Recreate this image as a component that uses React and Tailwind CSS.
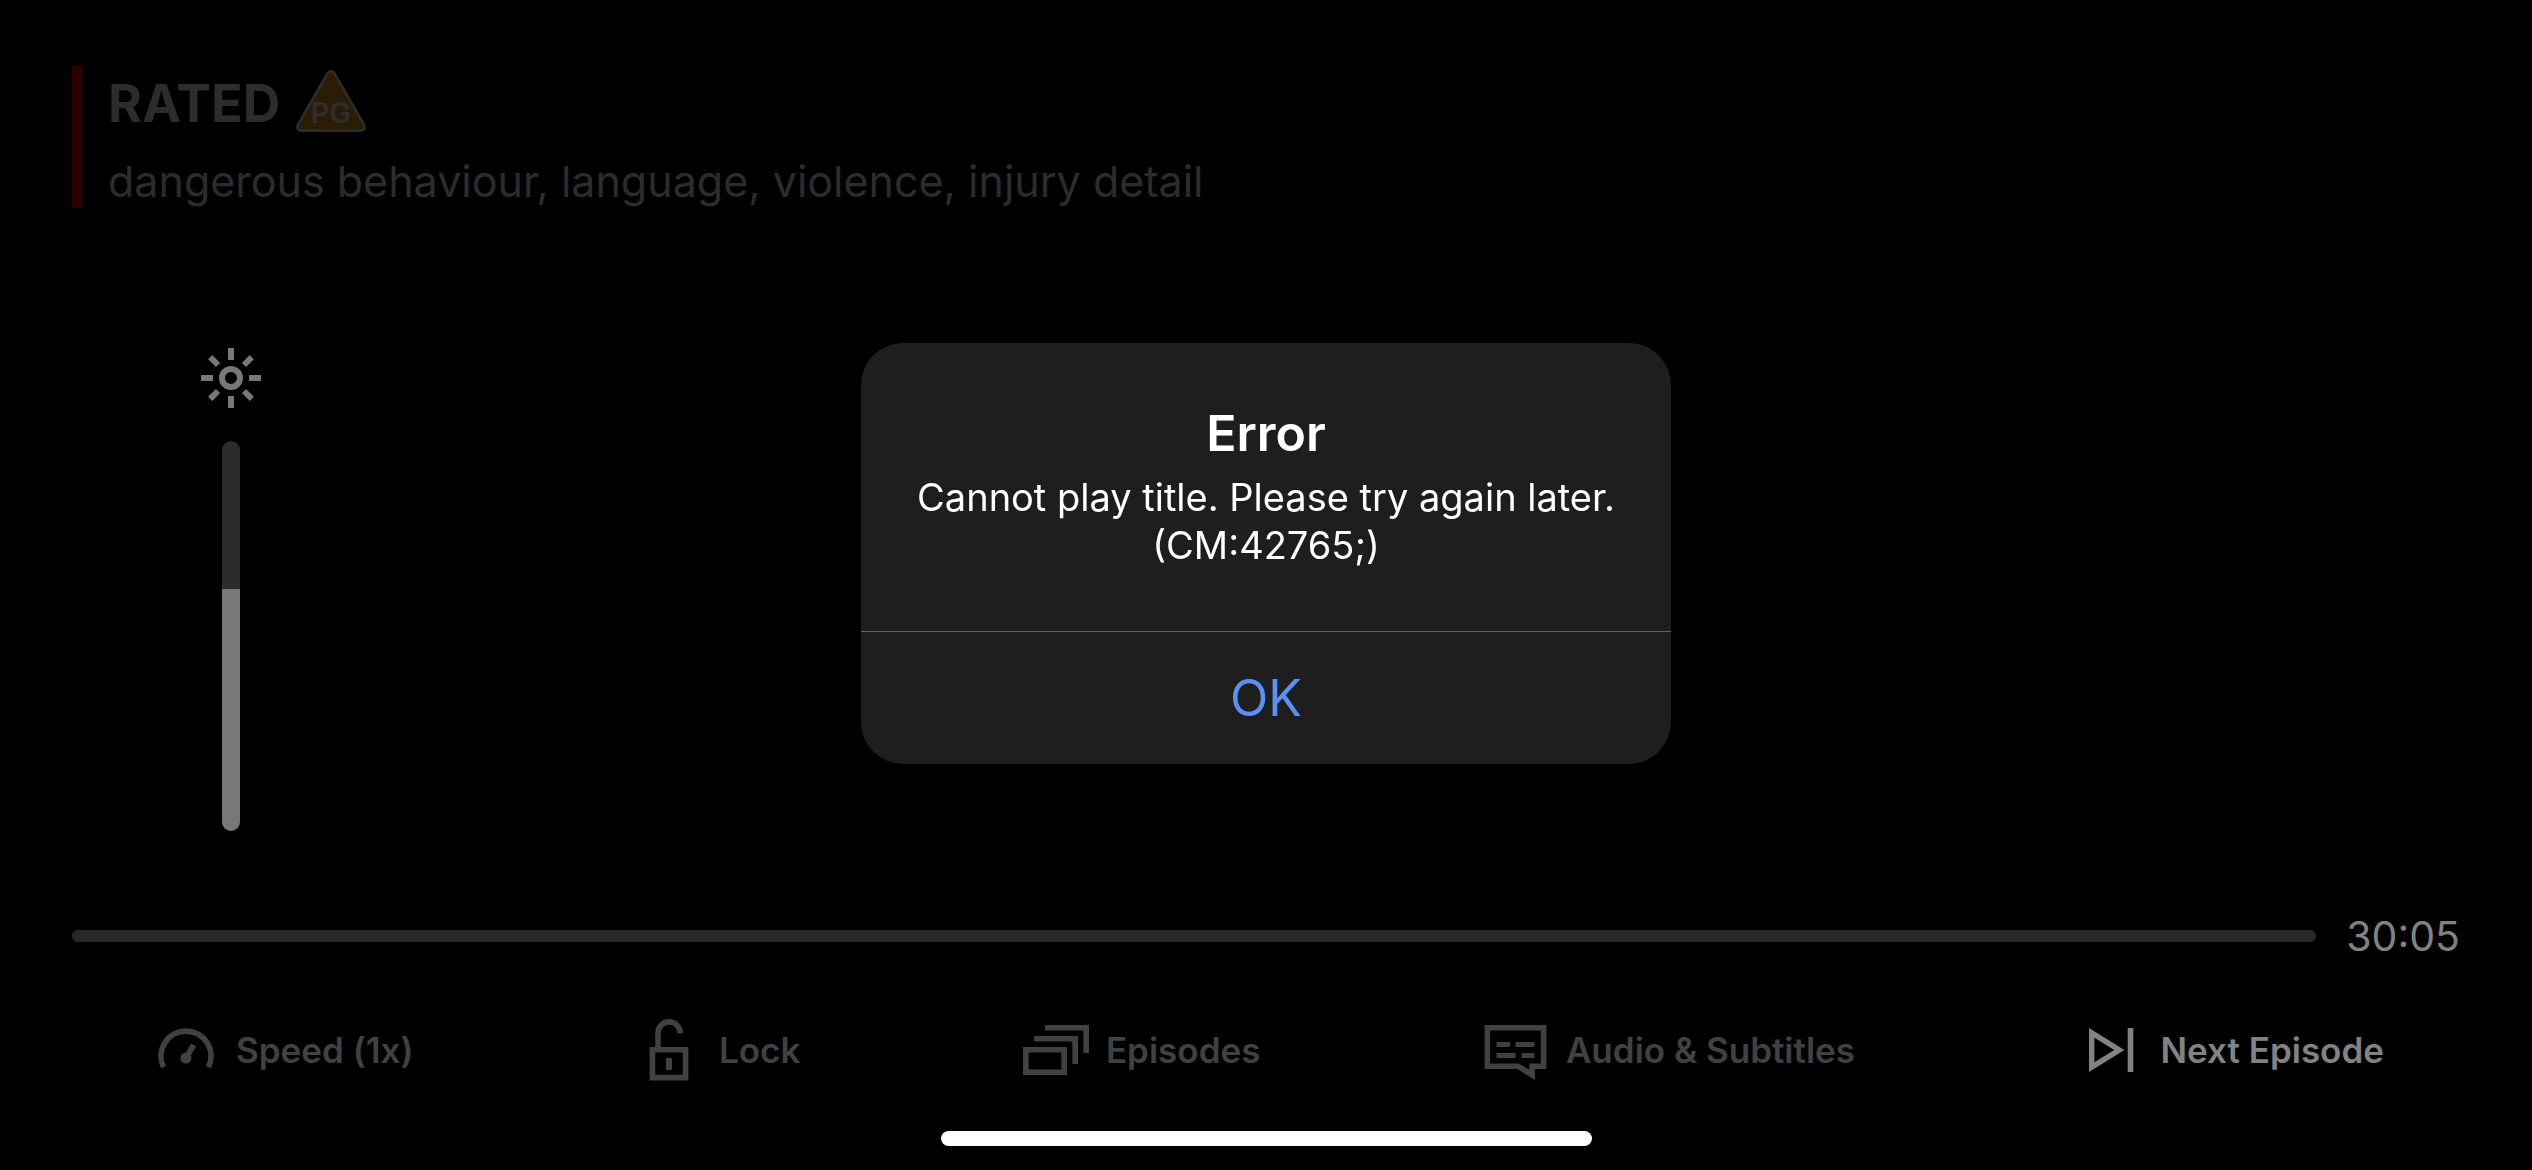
const icons = {
  speed: (
    <>
      <path d="M13.6 53.2A25 25 0 1 1 58.4 53.2" stroke="currentColor" strokeWidth="5.6" />
      <path d="M36 44L43.6 31" stroke="currentColor" strokeWidth="5.6" />
      <circle cx="36" cy="44" r="5.6" fill="currentColor" />
    </>
  ),
  lock: (
    <>
      <path d="M19.4 35.8H52.6V63.6H19.4Z" stroke="currentColor" strokeWidth="5.6" />
      <path d="M25 36V19a11.1 11.1 0 0 1 22.2 0V19.5" stroke="currentColor" strokeWidth="5.6" />
      <path d="M33 44h6v12h-6z" fill="currentColor" />
    </>
  ),
  episodes: (
    <g stroke="currentColor" strokeWidth="5.6">
      <path d="M5.8 35.8H44.2V58.2H5.8Z" />
      <path d="M14 24.8H55.2V50" />
      <path d="M25 13.8H66.2V39" />
    </g>
  ),
  subtitles: (
    <>
      <path d="M7.4 13.8H63.6V52.2H52.2V61L38 52.2H7.4Z" stroke="currentColor" strokeWidth="5.6" />
      <path d="M16.5 28H30v5H16.5zM35.5 28h19v5h-19zM16.5 39h19v5h-19zM41.5 39h13v5h-13z" fill="currentColor" />
    </>
  ),
  next: (
    <path
      d="M14 14V58L49.5 36ZM19.4 23.8V48.2L39.2 36ZM52.7 14H58.3V58H52.7Z"
      fill="currentColor"
      fillRule="evenodd"
    />
  ),
};

const controls = [
  { icon: "speed", label: "Speed (1x)", tone: "text-[#414141]" },
  { icon: "lock", label: "Lock", tone: "text-[#414141]" },
  { icon: "episodes", label: "Episodes", tone: "text-[#414141]" },
  { icon: "subtitles", label: "Audio & Subtitles", tone: "text-[#414141]" },
  { icon: "next", label: "Next Episode", tone: "text-[#828282]" },
];

function Rating() {
  return (
    <header className="flex text-[#2c2c2c]">
      <div className="w-[9px] bg-[#2e0000]" />
      <div className="ml-[27px]">
        <div className="flex gap-[16px]">
          <h1 className="text-[52px] leading-[76px] font-bold">RATED</h1>
          <svg className="mt-[4px] h-[62px] w-[70px]" viewBox="0 0 70 62" fill="none" role="img" aria-label="PG">
            <path
              d="M31.6 3.2Q35 -1 38.4 3.2L68 54.6Q70 60.5 64.5 60.8H5.5Q0 60.5 2 54.6Z"
              fill="#2a1c05"
              stroke="#2e2e2e"
              strokeWidth="2.4"
            />
            <text x="35" y="53" textAnchor="middle" fontSize="29" fontWeight="600" fill="#2e2e2e" className="font-['Inter',sans-serif]">
              PG
            </text>
          </svg>
        </div>
        <p className="mt-[12px] text-[43px] leading-[54px]">dangerous behaviour, language, violence, injury detail</p>
      </div>
    </header>
  );
}

function Brightness() {
  return (
    <label className="mt-[140px] ml-[129px] flex w-[60px] flex-col items-center gap-[33px] text-[#787878]">
      <svg className="size-[60px]" viewBox="-30 -30 60 60" fill="none" stroke="currentColor" strokeWidth="6" role="img" aria-label="Brightness">
        <circle r="9" />
        <path d="M0 -30V-18M0 18V30M-30 0H-18M18 0H30M-20.8 -20.8L-13 -13M20.8 -20.8L13 -13M-20.8 20.8L-13 13M20.8 20.8L13 13" />
      </svg>
      <input
        type="range"
        min="0"
        max="100"
        defaultValue="62"
        className="h-[390px] w-[18px] appearance-none rounded-full bg-linear-to-t from-[#787878] from-62% to-[#2c2c2c] to-62% [direction:rtl] [writing-mode:vertical-lr] [&::-webkit-slider-thumb]:size-0 [&::-webkit-slider-thumb]:appearance-none"
      />
    </label>
  );
}

function ErrorDialog() {
  return (
    <div className="fixed inset-0 flex items-center justify-center pb-[63px]">
      <div role="alertdialog" aria-labelledby="error-title" aria-describedby="error-text" className="w-[810px] overflow-hidden rounded-[42px] bg-[#1e1e1e] text-center text-white">
        <div className="px-[48px] pt-[60px] pb-[62px]">
          <h2 id="error-title" className="text-[50px] leading-[60px] font-semibold">Error</h2>
          <p id="error-text" className="mt-[10px] text-[38px] leading-[48px]">
            Cannot play title. Please try again later. (CM:42765;)
          </p>
        </div>
        <button type="button" className="block h-[133px] w-full border-t border-[#636363] text-[50px] text-[#5a91f7]">
          OK
        </button>
      </div>
    </div>
  );
}

export default function App() {
  return (
    <main className="flex min-h-screen flex-col bg-black px-[72px] pt-[66px] pb-[24px] font-['Inter',sans-serif]">
      <Rating />
      <Brightness />
      <div className="mt-auto flex items-center gap-[30px]">
        <input
          type="range"
          min="0"
          max="1805"
          defaultValue="0"
          aria-label="Playback position"
          className="h-[12px] min-w-0 flex-1 appearance-none rounded-full bg-[#282828] [&::-webkit-slider-thumb]:size-0 [&::-webkit-slider-thumb]:appearance-none"
        />
        <time className="text-[41px] leading-[48px] text-[#828282]">30:05</time>
      </div>
      <nav className="mt-[54px] flex justify-between pr-[76px] pl-[78px]">
        {controls.map(({ icon, label, tone }) => (
          <button key={icon} type="button" className={`flex items-center gap-[14px] text-[35px] font-semibold ${tone}`}>
            <svg className="size-[72px]" viewBox="0 0 72 72" fill="none" aria-hidden="true">
              {icons[icon]}
            </svg>
            {label}
          </button>
        ))}
      </nav>
      <div className="mt-[45px] h-[15px] w-[651px] self-center rounded-full bg-white" />
      <ErrorDialog />
    </main>
  );
}
